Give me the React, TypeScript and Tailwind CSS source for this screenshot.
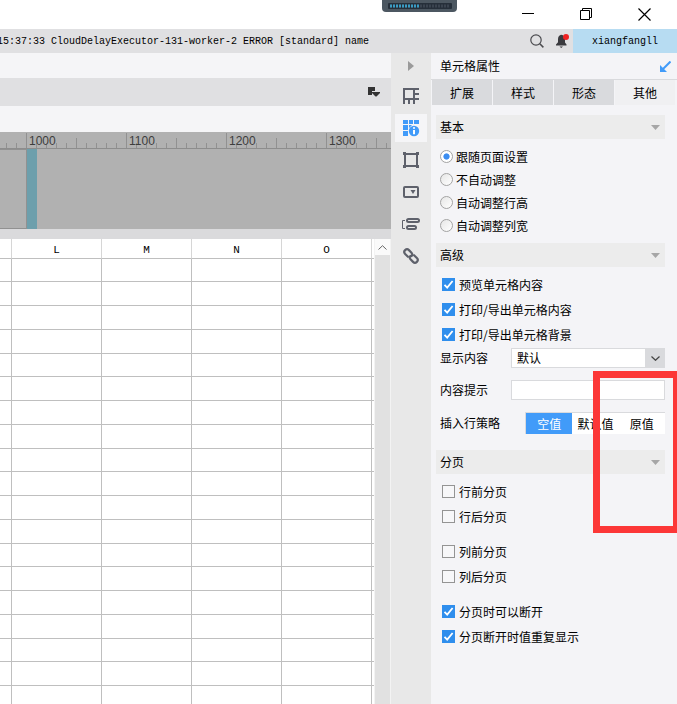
import { useState } from 'react'
import type { ReactNode } from 'react'
import clsx from 'clsx'

const columns = ['L', 'M', 'N', 'O']
const rowHeights = ['h-[23px]', 'h-6', 'h-6', 'h-6']
const rulerMarks = [1000, 1100, 1200, 1300]
const tabs = ['扩展', '样式', '形态', '其他']
const strategies = ['空值', '默认值', '原值']
const resizeModes = ['跟随页面设置', '不自动调整', '自动调整行高', '自动调整列宽']

function TitleBar() {
  return (
    <header className="relative flex h-[29px] shrink-0 justify-end bg-white pr-1">
      <div className="absolute top-0 right-[220px] flex h-3 w-[75px] items-center justify-center rounded-b-sm bg-[#4c5761]">
        <svg className="h-[6px] w-16" viewBox="0 0 64 6" aria-hidden="true">
          <rect width="64" height="6" rx="1" fill="#262f3a" />
          <path d="M2 3H62" stroke="#3b4450" strokeWidth="3" strokeDasharray="2 1" />
          <path d="M2 3H31" stroke="#3a9cc4" strokeWidth="3" strokeDasharray="2 1" />
        </svg>
      </div>
      <button aria-label="Minimize" className="flex w-[58px] items-center justify-center">
        <svg width="13" height="13" viewBox="0 0 13 13" stroke="#000">
          <path d="M0 5.5H12" />
        </svg>
      </button>
      <button aria-label="Restore" className="flex w-[58px] items-center justify-center">
        <svg width="13" height="13" viewBox="0 0 13 13" fill="none" stroke="#000">
          <path d="M.5 2.5H9.5V11.5H.5ZM2.5 2.5V.5H11.5V9.5H9.5" />
        </svg>
      </button>
      <button aria-label="Close" className="flex w-[58px] items-center justify-center">
        <svg width="13" height="13" viewBox="0 0 13 13" fill="none" stroke="#000" strokeWidth="1.2">
          <path d="M.5 .5L12.5 12.5M12.5 .5L.5 12.5" />
        </svg>
      </button>
    </header>
  )
}

function LogBar() {
  return (
    <div className="flex h-6 shrink-0 items-center bg-[#e0e0e2] font-['Liberation_Mono','Noto_Sans_CJK_SC',monospace] text-[10px] text-black">
      <div className="flex min-w-0 flex-1 justify-end overflow-hidden pr-[161px] whitespace-nowrap">
        15:37:33 CloudDelayExecutor-131-worker-2 ERROR [standard] name
      </div>
      <button aria-label="Search" className="mr-3 shrink-0">
        <svg width="14" height="14" viewBox="0 0 14 14" fill="none" stroke="#4a4a4e" strokeWidth="1.2">
          <circle cx="6" cy="6" r="5.2" />
          <path d="M9.8 9.8L13.4 13.4" strokeWidth="1.5" />
        </svg>
      </button>
      <button aria-label="Notifications" className="mr-1 shrink-0">
        <svg width="13" height="14" viewBox="0 0 13 14">
          <path d="M5 .8C2.8 1.6 2 3.2 2 5.4V8.2L0 10.6V11.4H10.5V10.6L9 8.6V4C8.6 2.2 7 1 5 .8Z" fill="#3a3a3e" />
          <path d="M3.5 12.4H7L5.2 14Z" fill="#3a3a3e" />
          <circle cx="10" cy="3" r="3" fill="#f02222" />
        </svg>
      </button>
      <button className="h-full w-[104px] shrink-0 bg-[#b7dcf2]">xiangfangll</button>
    </div>
  )
}

function Ruler() {
  const ticks = Array.from({ length: 200 }, (_, i) => i)
  return (
    <svg className="block h-[17px] w-full shrink-0 bg-[#b1b1b1]" aria-label="Ruler">
      {ticks.map((i) => {
        const x = i * 10 + 6.5
        const top = i % 10 === 2 ? 1 : i % 10 === 7 ? 6 : 11
        return <path key={i} d={`M${x} ${top}V16`} stroke="#919191" />
      })}
      <path d="M0 16.5H2000" stroke="#8d8d8d" />
      {rulerMarks.map((mark) => (
        <text
          key={mark}
          x={mark - 971}
          y="13"
          fill="#3d3d3d"
          className="font-['Liberation_Sans',sans-serif] text-[12px]"
        >
          {mark}
        </text>
      ))}
    </svg>
  )
}

function Sheet() {
  return (
    <div className="flex min-h-0 flex-1 overflow-hidden bg-white">
      <div className="min-w-0 flex-1 overflow-hidden">
        <table className="w-full table-fixed border-separate border-spacing-0 font-['Liberation_Mono',monospace] text-[11px] leading-none text-black">
          <thead>
            <tr className="h-5">
              <th className="w-3 border-r border-b border-r-[#d6d6d6] border-b-[#bfbfbf] p-0" />
              {columns.map((col) => (
                <th
                  key={col}
                  className="w-[90px] border-r border-b border-r-[#d6d6d6] border-b-[#bfbfbf] p-0 pt-1 font-normal"
                >
                  {col}
                </th>
              ))}
              <th className="border-b border-[#bfbfbf] p-0" />
            </tr>
          </thead>
          <tbody>
            {Array.from({ length: 19 }, (_, row) => (
              <tr key={row} className={rowHeights[row % 4]}>
                <td className="border-r border-b border-[#bfbfbf] p-0" />
                {columns.map((col) => (
                  <td key={col} className="border-r border-b border-[#bfbfbf] p-0" />
                ))}
                <td className="border-b border-[#bfbfbf] p-0" />
              </tr>
            ))}
          </tbody>
        </table>
      </div>
      <div className="flex w-[17px] shrink-0 flex-col border-x border-[#f3f3f3] bg-[#e1e1e1]">
        <button aria-label="Scroll up" className="flex h-4 items-center justify-center bg-[#fafafa]">
          <svg width="9" height="5" viewBox="0 0 9 5" fill="none" stroke="#666">
            <path d="M.5 4.5L4.5 .7L8.5 4.5" />
          </svg>
        </button>
      </div>
    </div>
  )
}

function Workspace() {
  return (
    <main className="flex min-w-0 flex-1 flex-col bg-[#f5f5f7]">
      <div className="h-[25px] shrink-0" />
      <div className="flex h-7 shrink-0 items-center justify-end bg-[#e0e0e2] pr-[11px]">
        <button aria-label="Layout">
          <svg width="12" height="10" viewBox="0 0 12 10" fill="#333">
            <path d="M0 0H7V4H4V8H0Z" />
            <path d="M4 5H12V6L8.5 9.5H7.5L4 6Z" />
          </svg>
        </button>
      </div>
      <div className="h-[26px] shrink-0" />
      <Ruler />
      <div className="flex h-20 shrink-0 bg-[#b1b1b1]">
        <div className="w-[27px] border-y border-r border-[#919191]" />
        <div className="w-[10px] bg-[#6d9fac]" />
      </div>
      <div className="h-[10px] shrink-0 bg-[#dadadc]" />
      <Sheet />
    </main>
  )
}

interface ToolProps {
  label: string
  active?: boolean
  children: ReactNode
}

function Tool({ label, active, children }: ToolProps) {
  return (
    <button
      aria-label={label}
      className={clsx('flex h-7 w-8 shrink-0 items-center justify-center', active && 'bg-[#f5f5f7]')}
    >
      <svg width="18" height="18" viewBox="0 0 18 18" fill="none" stroke="#5e616b" strokeWidth="2">
        {children}
      </svg>
    </button>
  )
}

function ToolStrip() {
  return (
    <nav className="flex w-10 shrink-0 flex-col items-center gap-1 bg-[#e8e8e8]">
      <button aria-label="Collapse" className="flex h-[25px] w-8 items-center justify-center">
        <svg width="6" height="10" viewBox="0 0 6 10" fill="#9a9a9a">
          <path d="M0 0L6 5L0 10Z" />
        </svg>
      </button>
      <Tool label="单元格元素">
        <path d="M1 2H17M2 1V17M12 1V17M7 12V17M1 12H17M12 7H17" />
      </Tool>
      <Tool label="单元格属性" active>
        <path
          d="M1 1H6V5H1ZM7 1H11V5H7ZM12 1H17V5H12ZM1 6H6V11H1ZM7 6H10L7 9ZM1 12H6V17H1Z"
          fill="#419bf9"
          stroke="none"
        />
        <circle cx="12" cy="12" r="5.2" fill="#419bf9" stroke="none" />
        <path d="M12 8.2V9.8M12 11V15.3" stroke="#fff" />
      </Tool>
      <Tool label="悬浮元素">
        <path d="M3 3H15V15H3Z" />
        <path d="M1 1H4V4H1ZM14 1H17V4H14ZM1 14H4V17H1ZM14 14H17V17H14Z" fill="#5e616b" stroke="none" />
      </Tool>
      <Tool label="控件设置">
        <rect x="2" y="4" width="14" height="10" rx="1" />
        <path d="M8.5 7H13.5L11 11Z" fill="#5e616b" stroke="none" />
      </Tool>
      <Tool label="条件属性">
        <rect x="5" y="4" width="12" height="3" rx="1.5" />
        <rect x="5" y="11" width="9" height="3" rx="1.5" />
        <path d="M3 5.5H.5V13.5H3" strokeWidth="1" />
      </Tool>
      <Tool label="超级链接">
        <g strokeWidth="2.2" strokeLinecap="round" transform="rotate(45 9 9)">
          <path d="M7.4 11.7H3.4A2.7 2.7 0 0 1 3.4 6.3H7A2.7 2.7 0 0 1 9.5 8.5" />
          <path d="M10.6 6.3H14.6A2.7 2.7 0 0 1 14.6 11.7H11A2.7 2.7 0 0 1 8.5 9.5" />
        </g>
      </Tool>
    </nav>
  )
}

function Section({ title, children }: { title: string; children: ReactNode }) {
  const [open, setOpen] = useState(true)
  return (
    <section>
      <button
        onClick={() => setOpen(!open)}
        className="flex h-6 w-full items-center justify-between bg-[#ececec] pr-[5px] pl-1"
      >
        {title}
        <svg width="9" height="5" viewBox="0 0 9 5" fill="#a6a6a6">
          <path d="M0 0H9L4.5 5Z" />
        </svg>
      </button>
      {open && children}
    </section>
  )
}

function CheckItem({ label, checked = false }: { label: string; checked?: boolean }) {
  return (
    <label className="flex h-[25px] items-center gap-1 pl-[6px]">
      <span className="grid">
        <input
          type="checkbox"
          defaultChecked={checked}
          className="peer col-start-1 row-start-1 size-[13px] appearance-none border border-[#949494] bg-[#f7f7f9] checked:border-[#2f8eed] checked:bg-[#2f8eed]"
        />
        <svg
          className="pointer-events-none invisible col-start-1 row-start-1 size-[13px] peer-checked:visible"
          viewBox="0 0 13 13"
          fill="none"
          stroke="#fff"
          strokeWidth="1.8"
        >
          <path d="M2.5 6.8L5.2 9.6L10.6 3" />
        </svg>
      </span>
      {label}
    </label>
  )
}

function PropertyPanel() {
  const [tab, setTab] = useState('其他')
  const [strategy, setStrategy] = useState('空值')

  return (
    <aside className="flex w-[246px] shrink-0 flex-col bg-[#f4f4f7] font-['Noto_Sans_CJK_SC',sans-serif] text-[12px] leading-4 text-black">
      <div className="flex h-[27px] shrink-0 items-center justify-between border-b border-[#d9dadd] pr-[6px] pl-[9px]">
        <h2>单元格属性</h2>
        <button aria-label="Dock panel">
          <svg width="11" height="11" viewBox="0 0 11 11" fill="none" stroke="#419bf9" strokeWidth="2">
            <path d="M10.5 .5L3 8" />
            <path d="M0 4V11H7Z" fill="#419bf9" stroke="none" />
          </svg>
        </button>
      </div>
      <div className="mr-[2px] ml-px flex h-[25px] shrink-0 gap-px">
        {tabs.map((name) => (
          <button
            key={name}
            onClick={() => setTab(name)}
            className={clsx('flex-1', tab === name ? 'bg-[#f0f0f2]' : 'bg-[#d9dadd]')}
          >
            {name}
          </button>
        ))}
      </div>

      <div className="pt-[10px] pr-3 pl-[5px]">
        <Section title="基本">
          <div className="py-[6px]">
            {resizeModes.map((mode, i) => (
              <label key={mode} className="flex h-[23px] items-center gap-[3px] pl-1">
                <input
                  type="radio"
                  name="resize"
                  defaultChecked={i === 0}
                  className="size-[13px] appearance-none rounded-full border border-[#a3a3a3] bg-linear-to-br from-[#e6e6e6] to-white checked:bg-radial checked:from-[#3c8df0] checked:from-35% checked:to-white checked:to-45%"
                />
                {mode}
              </label>
            ))}
          </div>
        </Section>

        <Section title="高级">
          <div className="pt-[5px] pb-4">
            <CheckItem label="预览单元格内容" checked />
            <CheckItem label="打印/导出单元格内容" checked />
            <CheckItem label="打印/导出单元格背景" checked />
            <div className="mt-px flex flex-col gap-3 pl-1">
              <div className="flex h-5 items-center">
                <label htmlFor="display" className="w-[71px]">显示内容</label>
                <div className="relative h-full flex-1">
                  <select
                    id="display"
                    className="block h-full w-full appearance-none border border-[#d9dadd] bg-white pl-[5px] outline-none"
                  >
                    <option>默认</option>
                  </select>
                  <span className="pointer-events-none absolute inset-y-0 right-0 flex w-5 items-center justify-center bg-[#d9dadd]">
                    <svg width="9" height="5" viewBox="0 0 9 5" fill="none" stroke="#444" strokeWidth="1.2">
                      <path d="M.5 .5L4.5 4.3L8.5 .5" />
                    </svg>
                  </span>
                </div>
              </div>
              <div className="flex h-5 items-center">
                <label htmlFor="hint" className="w-[71px]">内容提示</label>
                <input id="hint" type="text" className="h-full min-w-0 flex-1 border border-[#d9dadd] bg-white px-[5px] outline-none" />
              </div>
              <div className="flex h-[22px] items-center">
                <span className="w-[85px]">插入行策略</span>
                <div className="flex h-full flex-1 border-t border-l border-[#d9dadd] bg-white">
                  {strategies.map((name) => (
                    <button
                      key={name}
                      onClick={() => setStrategy(name)}
                      className={clsx('flex-1', strategy === name && 'bg-[#419bf9] text-white')}
                    >
                      {name}
                    </button>
                  ))}
                </div>
              </div>
            </div>
          </div>
        </Section>

        <Section title="分页">
          <div className="flex flex-col gap-[10px] pt-[5px]">
            <div>
              <CheckItem label="行前分页" />
              <CheckItem label="行后分页" />
            </div>
            <div>
              <CheckItem label="列前分页" />
              <CheckItem label="列后分页" />
            </div>
            <div>
              <CheckItem label="分页时可以断开" checked />
              <CheckItem label="分页断开时值重复显示" checked />
            </div>
          </div>
        </Section>
      </div>
    </aside>
  )
}

export default function App() {
  return (
    <div className="relative flex h-screen flex-col overflow-hidden bg-white">
      <TitleBar />
      <LogBar />
      <div className="flex min-h-0 flex-1">
        <Workspace />
        <ToolStrip />
        <PropertyPanel />
      </div>
      <div className="pointer-events-none absolute top-[371px] -right-[3px] h-[162px] w-[87px] border-[7px] border-[#fc3737]" />
    </div>
  )
}
